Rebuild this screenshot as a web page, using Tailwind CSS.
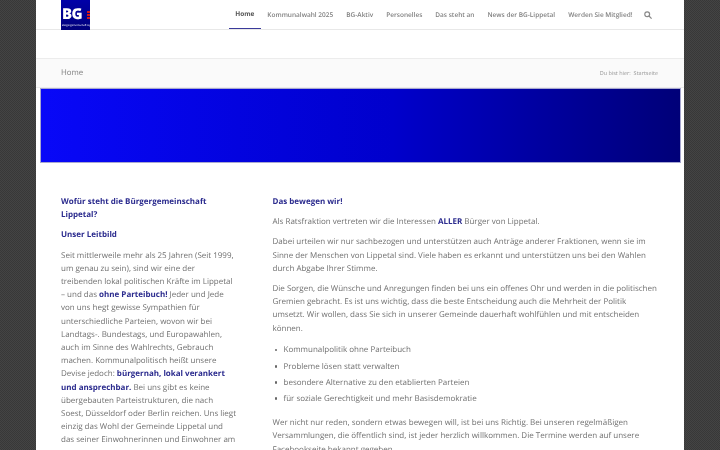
<!DOCTYPE html>
<html lang="en">
<head>
  <meta charset="UTF-8" />
  <title>BG Lippetal</title>
  <script src="https://cdn.jsdelivr.net/npm/@tailwindcss/browser@4"></script>
</head>
<body class="h-[450px] overflow-hidden bg-[conic-gradient(#444_25%,#383838_0_50%,#444_0_75%,#383838_0)] bg-[length:2px_2px] font-['Open_Sans',sans-serif] text-[8px] leading-[13.2px] text-[#707070] [text-rendering:geometricPrecision]">
  <div class="mx-auto h-[450px] w-[648px] overflow-hidden bg-white">
    <!-- header -->
    <header class="flex h-[30px] items-stretch border-b border-[#e8e8e8] pl-[25px] pr-[26px] will-change-transform">
      <div class="relative h-[29.5px] w-[29px] bg-gradient-to-b from-[#0000a8] to-[#00007c] text-white">
        <span class="absolute left-[1px] top-[5px] text-[15px] leading-[19px] font-extrabold tracking-[-0.5px]">BG</span>
        <span class="absolute left-[26px] top-[11px] h-[2px] w-[3px] bg-[#d01818]"></span>
        <span class="absolute left-[26px] top-[14px] h-[2px] w-[3px] bg-[#d01818]"></span>
        <span class="absolute left-[26px] top-[17px] h-[2px] w-[3px] bg-[#d01818]"></span>
        <span class="absolute left-[1px] top-[24px] whitespace-nowrap text-[2.6px] leading-[3px]">Bürgergemeinschaft Lippetal</span>
      </div>
      <nav class="ml-auto flex items-stretch text-[6.5px] font-semibold text-[#808080]">
        <a class="flex w-[32px] items-center justify-center border-b border-[#3a3a9a] font-bold text-[#555]">Home</a>
        <a class="flex items-center px-[6.5px]">Kommunalwahl 2025</a>
        <a class="flex items-center px-[6.5px]">BG-Aktiv</a>
        <a class="flex items-center px-[6.5px]">Personelles</a>
        <a class="flex items-center px-[6.5px]">Das steht an</a>
        <a class="flex items-center px-[6.5px]">News der BG-Lippetal</a>
        <a class="flex items-center px-[6.5px]">Werden Sie Mitglied!</a>
        <a class="flex items-center pl-[4.5px] pr-[6.5px]">
          <svg width="8" height="8" viewBox="0 0 8 8" fill="none" stroke="#888" stroke-width="1.2"><circle cx="3.2" cy="3.2" r="2.4"/><path d="M5 5l2.6 2.6"/></svg>
        </a>
      </nav>
    </header>
    <div class="h-[28px]"></div>
    <!-- title bar -->
    <div class="flex h-[29.5px] items-center justify-between border-y border-[#ececec] bg-[#fafafa] pl-[25px] pr-[26px] will-change-transform">
      <span class="mt-[1px] text-[7.9px] text-[#808080]">Home</span>
      <span class="mt-[1px] text-[5.5px] text-[#999]">Du bist hier: &nbsp;Startseite</span>
    </div>
    <!-- banner -->
    <div class="mx-[3.5px] h-[75px] border border-[#a8a8d0] bg-gradient-to-r from-[#0808f8] via-[#0000cc] via-55% to-[#000078]"></div>
    <!-- content -->
    <main class="mt-[32px] flex pl-[25px] pr-[24px] will-change-transform">
      <aside class="w-[176.5px] shrink-0">
        <p class="mb-[7px] font-bold text-[#2b2b8e]">Wofür steht die Bürgergemeinschaft Lippetal?</p>
        <p class="mb-[7px] font-bold text-[#2b2b8e]">Unser Leitbild</p>
        <p>Seit mittlerweile mehr als 25 Jahren (Seit 1999, um genau zu sein), sind wir eine der treibenden lokal politischen Kräfte im Lippetal – und das <b class="text-[#2b2b8e]">ohne Parteibuch!</b> Jeder und Jede von uns hegt gewisse Sympathien für unterschiedliche Parteien, wovon wir bei Landtags-. Bundestags, und Europawahlen, auch im Sinne des Wahlrechts, Gebrauch machen. Kommunalpolitisch heißt unsere Devise jedoch: <b class="text-[#2b2b8e]">bürgernah, lokal verankert und ansprechbar.</b> Bei uns gibt es keine übergebauten Parteistrukturen, die nach Soest, Düsseldorf oder Berlin reichen. Uns liegt einzig das Wohl der Gemeinde Lippetal und das seiner Einwohnerinnen und Einwohner am Herzen.</p>
      </aside>
      <section class="ml-[35px] flex-1">
        <p class="mb-[7px] font-bold text-[#2b2b8e]">Das bewegen wir!</p>
        <p class="mb-[7px]">Als Ratsfraktion vertreten wir die Interessen <b class="text-[#2b2b8e]">ALLER</b> Bürger von Lippetal.</p>
        <p class="mb-[7px]">Dabei urteilen wir nur sachbezogen und unterstützen auch Anträge anderer Fraktionen, wenn sie im Sinne der Menschen von Lippetal sind. Viele haben es erkannt und unterstützen uns bei den Wahlen durch Abgabe Ihrer Stimme.</p>
        <p class="mb-[7px]">Die Sorgen, die Wünsche und Anregungen finden bei uns ein offenes Ohr und werden in die politischen Gremien gebracht. Es ist uns wichtig, dass die beste Entscheidung auch die Mehrheit der Politik umsetzt. Wir wollen, dass Sie sich in unserer Gemeinde dauerhaft wohlfühlen und mit entscheiden können.</p>
        <ul class="mt-[8.5px] mb-[11px] pl-[11px]">
          <li class="relative mb-[3px] before:absolute before:left-[-8.6px] before:top-[5.5px] before:size-[2.5px] before:rounded-full before:bg-[#666] before:content-['']">Kommunalpolitik ohne Parteibuch</li>
          <li class="relative mb-[3px] before:absolute before:left-[-8.6px] before:top-[5.5px] before:size-[2.5px] before:rounded-full before:bg-[#666] before:content-['']">Probleme lösen statt verwalten</li>
          <li class="relative mb-[3px] before:absolute before:left-[-8.6px] before:top-[5.5px] before:size-[2.5px] before:rounded-full before:bg-[#666] before:content-['']">besondere Alternative zu den etablierten Parteien</li>
          <li class="relative mb-[3px] before:absolute before:left-[-8.6px] before:top-[5.5px] before:size-[2.5px] before:rounded-full before:bg-[#666] before:content-['']">für soziale Gerechtigkeit und mehr Basisdemokratie</li>
        </ul>
        <p>Wer nicht nur reden, sondern etwas bewegen will, ist bei uns Richtig. Bei unseren regelmäßigen Versammlungen, die öffentlich sind, ist jeder herzlich willkommen. Die Termine werden auf unsere Facebookseite bekannt gegeben.</p>
      </section>
    </main>
  </div>
</body>
</html>
